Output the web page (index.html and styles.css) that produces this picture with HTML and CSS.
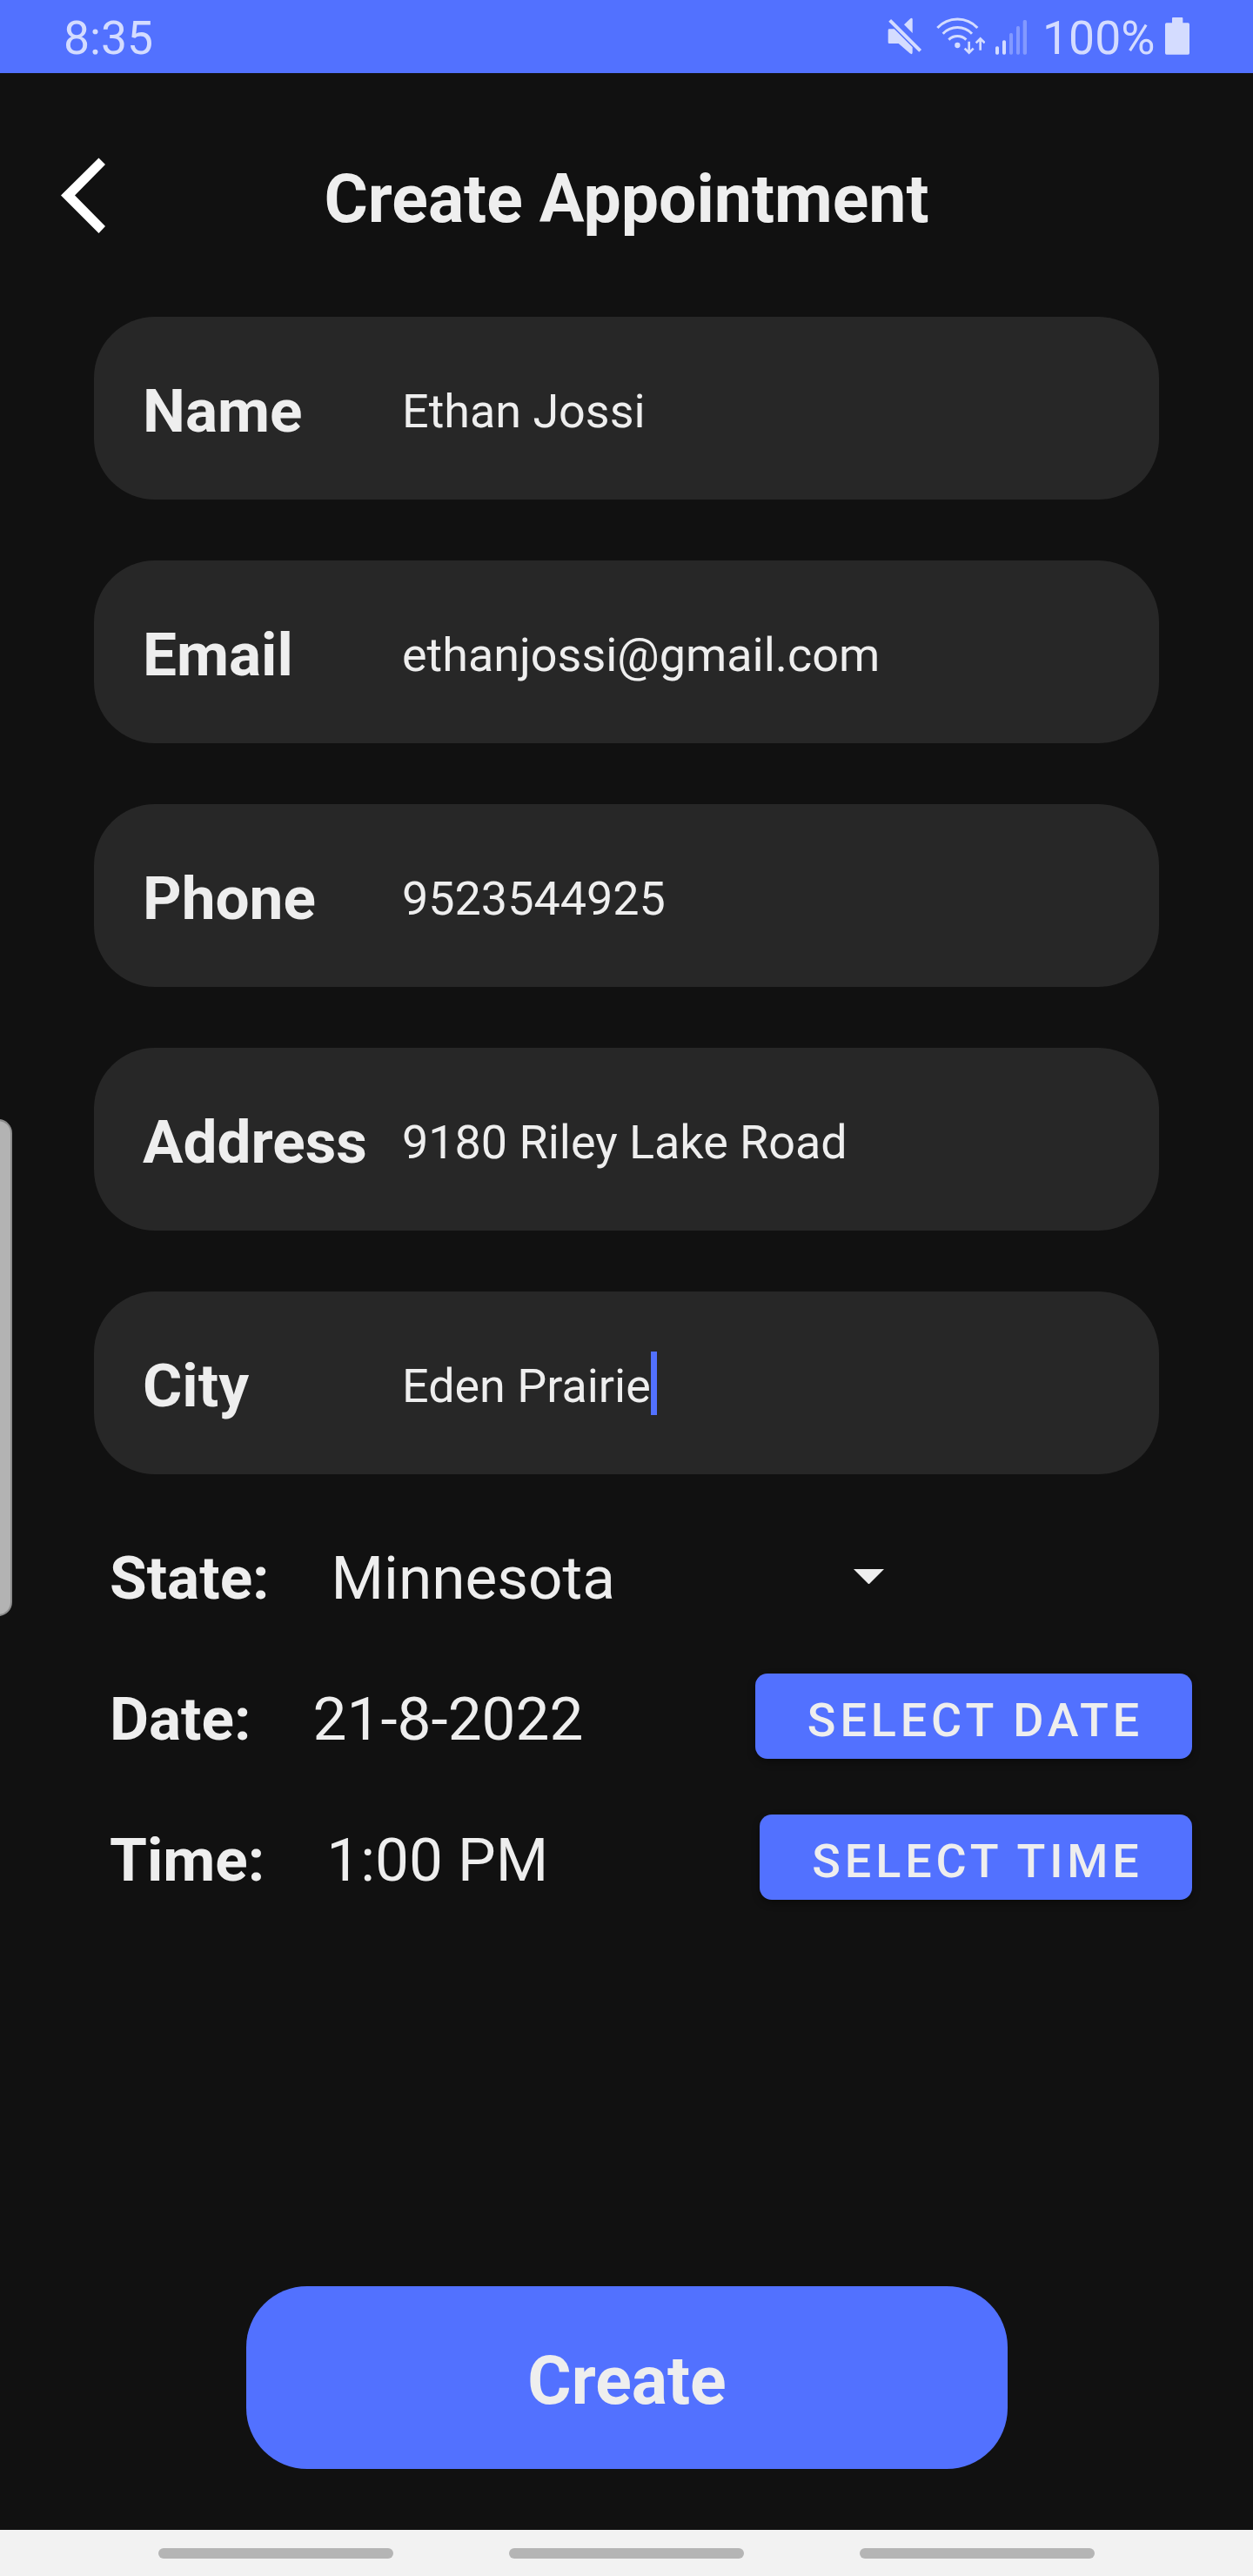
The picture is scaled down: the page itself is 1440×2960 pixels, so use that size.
FILE: index.html
```html
<!DOCTYPE html>
<html lang="en">
<head>
<meta charset="utf-8">
<title>Create Appointment</title>
<link rel="stylesheet" href="styles.css">
</head>
<body>
<div class="screen">
  <div class="status-bar">
    <span class="clock">8:35</span>
    <div class="status-icons">
      <svg class="icon-mute" viewBox="0 0 120 129" width="40" height="43">
        <path d="M2 44q0-4 4-4h17L86 103v18q0 9-9 3L38 90H6q-4 0-4-4z"/>
        <path d="M57 25L79 4q7-5 7 3v47z"/>
        <path d="M8 10l105 105" class="line" stroke-width="12"/>
      </svg>
      <svg class="icon-wifi" viewBox="0 0 168 129" width="56" height="43">
        <path d="M4 36a94 94 0 0 1 138 0M23 56a69 69 0 0 1 100 0M43 77a43 43 0 0 1 60 0" class="line" stroke-width="9"/>
        <circle cx="73" cy="96" r="9.5"/>
        <path d="M113 83v38M98 107l15 15 15-15M152 113V75M137 88l15-15 15 15" class="line" stroke-width="8"/>
      </svg>
      <svg class="icon-signal" viewBox="0 0 108 129" width="36" height="43">
        <rect x="0" y="100" width="12" height="28" rx="5"/>
        <rect x="24" y="79" width="12" height="49" rx="5"/>
        <g opacity=".38">
          <rect x="48" y="54" width="12" height="74" rx="5"/>
          <rect x="72" y="30" width="12" height="98" rx="5"/>
          <rect x="95" y="9" width="13" height="119" rx="5"/>
        </g>
      </svg>
      <span class="battery-level">100%</span>
      <svg class="icon-battery" viewBox="0 0 84 129" width="28" height="43">
        <path d="M24 3q0-3 3-3h31q3 0 3 3v16h18q5 0 5 5v99q0 5-5 5H5q-5 0-5-5V24q0-5 5-5h19z"/>
      </svg>
    </div>
  </div>

  <header class="header">
    <svg class="back" viewBox="0 0 52 88" width="52" height="88">
      <path d="M43.5 0.5L51 8 16 43.5 51 79l-7.500 8L0 43.500z"/>
    </svg>
    <h1 class="title">Create Appointment</h1>
  </header>

  <main class="form">
    <div class="fields">
      <div class="field"><span class="label">Name</span><span class="value">Ethan Jossi</span></div>
      <div class="field"><span class="label">Email</span><span class="value">ethanjossi@gmail.com</span></div>
      <div class="field"><span class="label">Phone</span><span class="value">9523544925</span></div>
      <div class="field"><span class="label">Address</span><span class="value">9180 Riley Lake Road</span></div>
      <div class="field"><span class="label">City</span><span class="value">Eden Prairie</span><span class="caret"></span></div>
    </div>

    <div class="rows">
      <div class="row">
        <span class="row-label">State:</span>
        <span class="row-value state-value">Minnesota</span>
        <svg class="dropdown" viewBox="0 0 35 17.500" width="35" height="17.500"><path d="M0 0h35L17.500 17.500z"/></svg>
      </div>
      <div class="row">
        <span class="row-label">Date:</span>
        <span class="row-value">21-8-2022</span>
        <button class="select select-date">SELECT DATE</button>
      </div>
      <div class="row">
        <span class="row-label">Time:</span>
        <span class="row-value">1:00 PM</span>
        <button class="select select-time">SELECT TIME</button>
      </div>
    </div>

    <button class="create">Create</button>
  </main>

  <nav class="nav-bar">
    <span class="pill"></span>
    <span class="pill"></span>
    <span class="pill"></span>
  </nav>
  <div class="edge-handle"></div>
</div>
</body>
</html>
```
FILE: styles.css
```css
* {
  box-sizing: border-box;
}

body {
  margin: 0;
  background: #111111;
  color: #eeeeee;
  font-family: Roboto, "Liberation Sans", sans-serif;
}

button {
  border: 0;
  margin: 0;
  color: inherit;
  font-family: inherit;
}

svg {
  display: block;
  flex: none;
}

.screen {
  position: relative;
  display: flex;
  flex-direction: column;
  width: 1440px;
  height: 2960px;
  overflow: hidden;
}

/* Status bar */
.status-bar {
  display: flex;
  justify-content: space-between;
  height: 84px;
  padding: 0 73px 0 73px;
  background: #5271ff;
  color: #d4dcff;
  font-size: 53.5px;
  line-height: 88px;
}

.status-icons {
  display: flex;
  align-items: flex-start;
}

.status-icons svg {
  margin-top: 20px;
  fill: #d4dcff;
}

.status-icons .line {
  fill: none;
  stroke: #d4dcff;
}

.icon-wifi {
  margin-left: 16px;
}

.icon-signal {
  margin-left: 12px;
}

.battery-level {
  width: 129px;
  margin-left: 18px;
  margin-right: 12px;
  white-space: nowrap;
}

/* Header */
.header {
  display: grid;
  grid-template-columns: 70px 1fr 70px;
  height: 280px;
  padding: 0 70px;
}

.back {
  margin-top: 97px;
  fill: #ffffff;
}

.title {
  margin: 0;
  font-size: 77px;
  font-weight: 700;
  line-height: 290px;
  text-align: center;
}

/* Text fields */
.form {
  display: flex;
  flex: 1;
  flex-direction: column;
}

.fields {
  display: flex;
  flex-direction: column;
  gap: 70px;
  padding: 0 108px;
}

.field {
  display: flex;
  align-items: center;
  height: 210px;
  padding: 7px 56px 0;
  border-radius: 70px;
  background: #272727;
}

.label {
  width: 298px;
  font-size: 69.3px;
  font-weight: 700;
}

.value {
  font-size: 53.9px;
}

.caret {
  width: 7px;
  height: 73px;
  margin-top: -7px;
  background: #5271ff;
}

/* Selection rows */
.rows {
  padding: 38px 70px 0 126px;
}

.row {
  display: flex;
  align-items: center;
  height: 162px;
  font-size: 69.3px;
}

.row-label {
  margin-right: 71px;
  font-weight: 700;
}

.state-value {
  width: 600px;
}

.dropdown {
  margin-top: -3px;
  fill: #eeeeee;
}

.select {
  height: 98px;
  margin: -7px 0 0 auto;
  padding: 9px 0 0 4px;
  border-radius: 14px;
  background: #5271ff;
  box-shadow: 0 4px 8px rgba(0, 0, 0, 0.35);
  font-size: 53.9px;
  font-weight: 500;
  letter-spacing: 4.9px;
  line-height: 89px;
  text-align: center;
}

.select-date {
  width: 502px;
}

.select-time {
  width: 497px;
}

.create {
  width: 875px;
  height: 210px;
  margin: auto 0 70px 283px;
  padding: 7px 0 0;
  border-radius: 70px;
  background: #5271ff;
  font-size: 77px;
  font-weight: 700;
}

/* System navigation */
.nav-bar {
  display: flex;
  justify-content: center;
  gap: 133px;
  height: 53px;
  padding-top: 21px;
  background: #f2f2f2;
}

.pill {
  width: 270px;
  height: 12px;
  border-radius: 6px;
  background: #b5b5b5;
}

/* Edge panel handle, floating above the form */
.edge-handle {
  position: absolute;
  top: 1286px;
  left: -20px;
  width: 34px;
  height: 571px;
  border: 2px solid #8c8c8c;
  border-radius: 16px;
  background: #b3b3b3;
}
```
